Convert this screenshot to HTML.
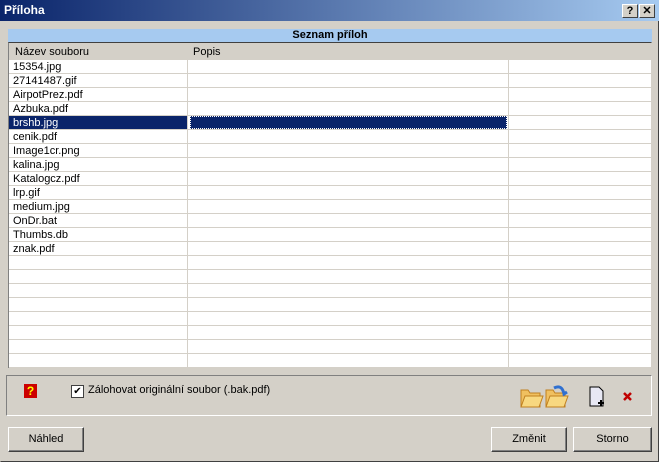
<!DOCTYPE html><html><head><style>
body{margin:0;width:659px;height:462px;background:#d4d0c8;font-family:"Liberation Sans",sans-serif;font-size:11px;position:relative;overflow:hidden}
.a{position:absolute}
#title{left:0;top:0;width:659px;height:21px;background:linear-gradient(90deg,#0a246a,#a6caf0);color:#fff;font-weight:bold;font-size:12px;line-height:20px;box-sizing:border-box;padding-left:4px}
.tb{top:4px;width:16px;height:14px;background:#d4d0c8;border:1px solid;border-color:#fff #404040 #404040 #fff;color:#000;font-weight:bold;font-size:11px;text-align:center;line-height:13px;box-sizing:border-box}
#grid{left:8px;top:42px;width:644px;height:326px;background:#fff;border-top:1px solid #404040;border-left:1px solid #808080;border-right:1px solid #d4d0c8;box-sizing:border-box;overflow:hidden}
.row{position:absolute;left:0;width:643px;height:14px;border-bottom:1px solid #d4d0c8;box-sizing:border-box;line-height:15px}
.c1{position:absolute;left:0;top:0;width:179px;padding-left:4px;box-sizing:border-box;height:13px}
.vl{position:absolute;top:0;bottom:0;width:1px;background:#d4d0c8}
.btn{top:427px;height:25px;background:#d4d0c8;border:1px solid;border-color:#fff #404040 #404040 #fff;box-shadow:inset -1px -1px #808080;box-sizing:border-box;text-align:center;line-height:22px;font-size:11px}
</style></head><body>
<div class="a" style="left:0;top:0;width:659px;height:462px;box-sizing:border-box;border:1px solid;border-color:#d4d0c8 #404040 #404040 #d4d0c8"></div>
<div id="title" class="a">Příloha</div>
<div class="a tb" style="left:622px">?</div>
<div class="a tb" style="left:639px">✕</div>
<div class="a" style="left:8px;top:29px;width:644px;height:13px;background:#a6caf0;text-align:center;font-weight:bold;line-height:13px">Seznam příloh</div>
<div id="grid" class="a">
<div class="vl" style="left:178px"></div><div class="vl" style="left:499px"></div>
<div class="row" style="top:0;height:17px;background:#d4d0c8;border:none;line-height:18px"><span style="position:absolute;left:6px">Název souboru</span><span style="position:absolute;left:184px">Popis</span></div>
</div>
<div class="a" style="left:6px;top:375px;width:646px;height:41px;border:1px solid;border-color:#808080 #fff #fff #808080;box-sizing:border-box"></div>
<div class="a" style="left:24px;top:384px;width:13px;height:14px;background:#c00;color:#ff0;font-weight:bold;text-align:center;line-height:14px;font-size:12px">?</div>
<div class="a" style="left:71px;top:385px;width:11px;height:11px;background:#fff;border:1px solid #404040;font-size:10px;line-height:11px;text-align:center">✔</div>
<div class="a" style="left:88px;top:384px">Zálohovat originální soubor (.bak.pdf)</div>
<svg class="a" style="left:518px;top:382px" width="130" height="28">
<path d="M3 8h7l2 3h10v14H3z" fill="#f0c060" stroke="#c08020"/><path d="M3 25l4-11h18l-4 11z" fill="#f8d880" stroke="#c08020"/>
<path d="M28 8h7l2 3h10v14H28z" fill="#f0c060" stroke="#c08020"/><path d="M28 25l4-11h18l-4 11z" fill="#f8d880" stroke="#c08020"/><path d="M36 6q8-4 10 6l3-2" stroke="#3070d0" stroke-width="3" fill="none"/>
<path d="M72 5h9l4 4v15H72z" fill="#e8e8f4" stroke="#000"/><path d="M80 21h6M83 18v6" stroke="#000" stroke-width="2"/>
<path d="M106 11l7 7M113 11l-7 7" stroke="#c00000" stroke-width="2.5"/>
</svg>
<div class="a btn" style="left:8px;width:76px">Náhled</div>
<div class="a btn" style="left:491px;width:76px">Změnit</div>
<div class="a btn" style="left:573px;width:79px">Storno</div>
<script>
var n=["15354.jpg","27141487.gif","AirpotPrez.pdf","Azbuka.pdf","brshb.jpg","cenik.pdf","Image1cr.png","kalina.jpg","Katalogcz.pdf","lrp.gif","medium.jpg","OnDr.bat","Thumbs.db","znak.pdf"];
var g=document.getElementById('grid'),h='';
for(var i=0;i<22;i++){var t=17+i*14,s=i==4;
h+='<div class="row" style="top:'+t+'px">'+(s?'<div style="position:absolute;left:0;top:0;width:178px;height:13px;background:#0a246a"></div><div style="position:absolute;left:181px;top:0;width:317px;height:13px;background:#0a246a;outline:1px dotted #fff;outline-offset:-1px"></div>':'')+'<div class="c1" style="color:'+(s?'#fff':'#000')+'">'+(n[i]||'')+'</div></div>';}
g.insertAdjacentHTML('beforeend',h);
</script>
</body></html>
